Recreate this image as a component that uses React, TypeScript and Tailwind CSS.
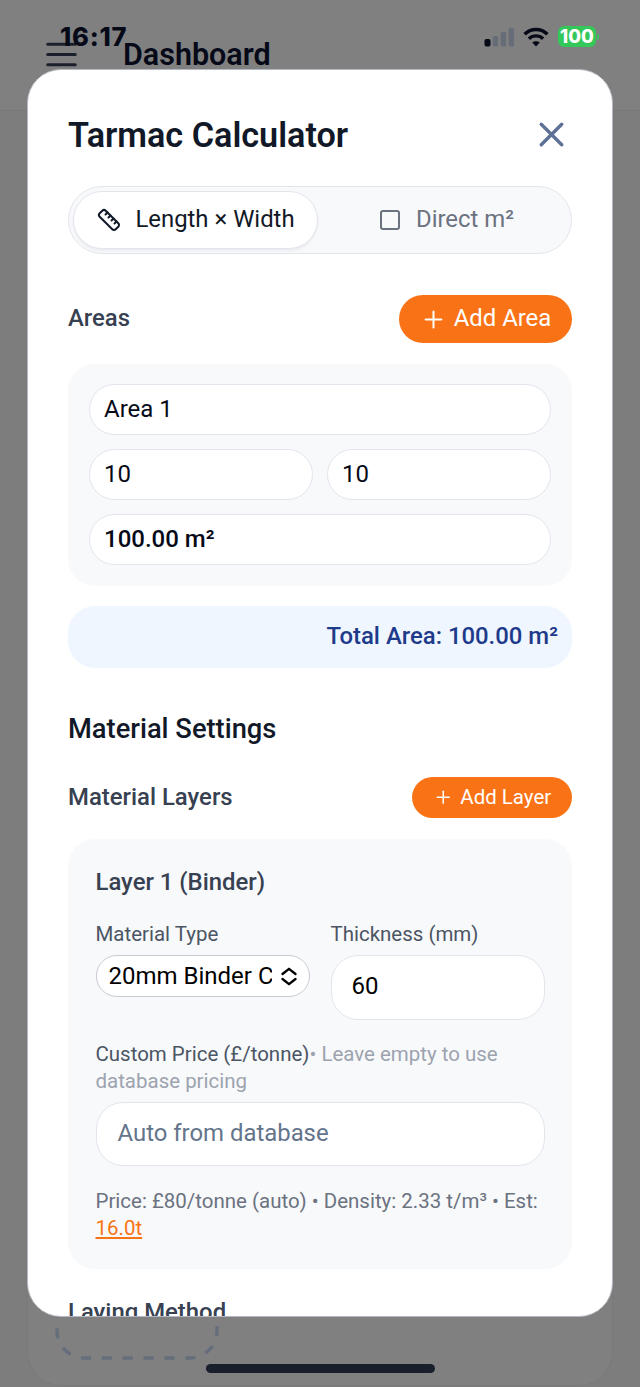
import React, { useState } from 'react';
import { Plus, Ruler, Square, X } from 'lucide-react';

// ─── Types ───────────────────────────────────────────────────────────────────

type Mode = 'dimensions' | 'direct';

// ─── Status bar ───────────────────────────────────────────────────────────────

function StatusBar() {
  return (
    <div className="absolute inset-x-0 top-0 z-20 flex h-[70px] items-start justify-between pl-[60px] pr-[41px] pt-[22px]">
      <span className="font-['Inter'] text-[25.5px] font-extrabold leading-[29px] tracking-[0.8px] text-[#060a18]">
        16:17
      </span>
      <div className="flex items-center pt-[4px]">
        <svg width="31" height="20" viewBox="0 0 31 20" aria-hidden="true">
          <rect x="0.5" y="12" width="6" height="7.5" rx="1.8" fill="#060a18" />
          <rect x="8.7" y="9" width="5.4" height="10.5" rx="1.6" fill="#666c78" />
          <rect x="16.7" y="5" width="5.4" height="14.5" rx="1.6" fill="#666c78" />
          <rect x="24.7" y="1" width="5.4" height="18.5" rx="1.6" fill="#666c78" />
        </svg>
        <svg className="ml-[8px]" width="26" height="20" viewBox="0 0 26 20" fill="none" aria-hidden="true">
          <path d="M1.6 7.2C8 0.9 18 0.9 24.4 7.2" stroke="#060a18" strokeWidth="3.5" />
          <path d="M5.9 11.8C9.9 8 16.1 8 20.1 11.8" stroke="#060a18" strokeWidth="3.3" />
          <path d="M13 19.4L9.2 15.6C11.3 13.7 14.7 13.7 16.8 15.6Z" fill="#060a18" />
        </svg>
        <div className="ml-[9px] flex h-[21px] w-[38px] items-center justify-center rounded-[6px] bg-[#34c759] font-['Inter'] text-[18.5px] font-extrabold leading-none text-white">
          100
        </div>
        <span className="ml-[1px] h-[6px] w-[2px] rounded-r-full bg-[#34c759]" />
      </div>
    </div>
  );
}

// ─── Page behind the dialog ───────────────────────────────────────────────────

function DashboardBackdrop() {
  return (
    <div className="flex h-full flex-col bg-[#7d7d7d]">
      <header className="flex h-[111px] shrink-0 items-start border-b border-[#777777] bg-[#808080] pl-[41px] pt-[34px]">
        <svg width="41" height="41" viewBox="0 0 24 24" fill="none" aria-hidden="true">
          <path d="M4 6h16M4 12h16M4 18h16" stroke="#1b202d" strokeWidth="1.9" strokeLinecap="round" />
        </svg>
        <h1 className="ml-[41px] text-[30.5px] font-semibold leading-[41px] text-[#060a18]">Dashboard</h1>
      </header>
      <main className="flex flex-1 flex-col px-[27px]">
        <div className="flex h-[1275px] flex-col justify-end rounded-[34px] border border-[#7a7a7a] bg-[#808080] px-[27px] pb-[25px]">
          <svg width="164" height="124" viewBox="0 0 164 124" fill="none" aria-hidden="true">
            <path
              d="M2 0V95A27 27 0 0 0 29 122H135A27 27 0 0 0 162 95V0"
              stroke="#666e7b"
              strokeWidth="3.4"
              strokeDasharray="10.2 10.7"
              strokeDashoffset="12.2"
            />
          </svg>
        </div>
      </main>
    </div>
  );
}

// ─── Form pieces ──────────────────────────────────────────────────────────────

function AreaField({ children, bold = false }: { children: React.ReactNode; bold?: boolean }) {
  return (
    <div
      className={`flex h-[51px] flex-1 items-center rounded-full border-[1.5px] border-[#e2e5ec] bg-white px-[14px] pb-[2px] text-[24px] leading-[34px] text-[#060a18] ${
        bold ? 'font-medium' : 'font-normal'
      }`}
    >
      {children}
    </div>
  );
}

function ModeToggle() {
  const [mode, setMode] = useState<Mode>('dimensions');
  const active = 'border-[1.5px] border-[#e2e5ec] bg-white text-[#111827] shadow-[0_2px_3px_rgba(15,23,42,0.06)]';
  const idle = 'text-[#6b7280]';

  return (
    <div className="mt-[28px] flex h-[68px] shrink-0 rounded-full border-[1.5px] border-[#e2e5ec] bg-[#f8f9fb] p-[4px]">
      <button
        type="button"
        onClick={() => setMode('dimensions')}
        className={`flex h-[58px] flex-1 items-center justify-center gap-[14px] rounded-full pl-px text-[23.9px] ${
          mode === 'dimensions' ? active : idle
        }`}
      >
        <Ruler className="h-[24px] w-[24px]" />
        <span>Length × Width</span>
      </button>
      <button
        type="button"
        onClick={() => setMode('direct')}
        className={`ml-[7px] flex h-[58px] flex-1 items-center justify-center gap-[14px] rounded-full text-[23.9px] ${
          mode === 'direct' ? active : idle
        }`}
      >
        <Square className="h-[24px] w-[24px]" />
        <span>Direct m²</span>
      </button>
    </div>
  );
}

function LayerCard() {
  return (
    <section className="mt-[21px] flex h-[430px] shrink-0 flex-col rounded-[27px] bg-[#f8f9fb] px-[27.5px] pt-[26px] text-[20.48px] leading-[27px] text-[#4b5563]">
      <h4 className="text-[23.9px] font-medium leading-[34px] text-[#374151]">Layer 1 (Binder)</h4>

      <div className="mt-[22px] flex gap-[21px]">
        <div className="w-[214px]">
          <div>Material Type</div>
          <div className="mt-[7px] flex h-[42px] items-center rounded-full border-[1.5px] border-[#c9cbd3] bg-white pl-[12px] text-[24px] text-black">
            <span className="w-[163px] overflow-hidden whitespace-nowrap leading-[34px]">
              20mm Binder C
            </span>
            <svg className="ml-[9px] shrink-0" width="16" height="19" viewBox="0 0 16 19" fill="none" aria-hidden="true">
              <path
                d="M1.5 7L8 1.8L14.5 7M1.5 12L8 17.2L14.5 12"
                stroke="black"
                strokeWidth="2.3"
                strokeLinecap="round"
                strokeLinejoin="round"
              />
            </svg>
          </div>
        </div>
        <div className="flex-1">
          <div>Thickness (mm)</div>
          <div className="mt-[7px] flex h-[65px] items-center rounded-[27px] border-[1.5px] border-[#e2e5ec] bg-white pb-[2px] pl-[20px] text-[24px] text-black">
            60
          </div>
        </div>
      </div>

      <div className="mt-[21px]">
        Custom Price (£/tonne)
        <span className="text-[#9ca3af]">• Leave empty to use database pricing</span>
      </div>
      <div className="mt-[7px] flex h-[64px] shrink-0 items-center rounded-[27px] border-[1.5px] border-[#e2e5ec] bg-white pb-[1px] pl-[21px] text-[23.9px] text-[#64748b]">
        Auto from database
      </div>

      <p className="mt-[22px] whitespace-nowrap text-[#6b7280]">
        Price: £80/tonne (auto) • Density: 2.33 t/m³ • Est:
        <br />
        <span className="text-[#f97316] underline">16.0t</span>
      </p>
    </section>
  );
}

// ─── TarmacCalculator ─────────────────────────────────────────────────────────

function TarmacCalculator() {
  return (
    <div
      role="dialog"
      aria-label="Tarmac Calculator"
      className="flex h-[1248px] w-[586px] flex-col overflow-hidden rounded-[34px] border border-[#b4b8c0] bg-white px-[40px] pt-[40px]"
    >
      <div className="flex h-[48px] shrink-0 items-center justify-between">
        <h2 className="mt-[3px] text-[34.2px] font-semibold text-[#111827]">Tarmac Calculator</h2>
        <button type="button" aria-label="Close">
          <X className="h-[41px] w-[41px] text-[#5f7096]" strokeWidth={2} />
        </button>
      </div>

      <ModeToggle />

      {/* Areas */}
      <div className="mt-[41px] flex h-[48px] shrink-0 items-center justify-between">
        <h3 className="text-[23.9px] font-medium text-[#374151]">Areas</h3>
        <button
          type="button"
          className="flex h-[48px] w-[173px] items-center justify-center gap-[7px] rounded-full bg-[#f97316] text-[23.9px] text-white"
        >
          <Plus className="h-[27px] w-[27px]" strokeWidth={1.8} />
          <span className="-mt-[1px]">Add Area</span>
        </button>
      </div>

      <section className="mt-[21px] flex h-[222px] shrink-0 flex-col gap-[14px] rounded-[27px] bg-[#f8f9fb] px-[21px] py-[20px]">
        <div className="flex">
          <AreaField>Area 1</AreaField>
        </div>
        <div className="flex gap-[14px]">
          <AreaField>10</AreaField>
          <AreaField>10</AreaField>
        </div>
        <div className="flex">
          <AreaField bold>100.00 m²</AreaField>
        </div>
      </section>

      <div className="mt-[20px] flex h-[62px] shrink-0 items-center justify-end rounded-[27px] bg-[#eff6ff] pb-[1px] pr-[14px] text-[23.9px] font-medium text-[#1e3a8a]">
        Total Area: 100.00 m²
      </div>

      {/* Material settings */}
      <h3 className="mt-[41px] text-[27.3px] font-medium leading-[41px] text-[#111827]">Material Settings</h3>

      <div className="mt-[27px] flex h-[41px] shrink-0 items-center justify-between">
        <h4 className="text-[23.9px] font-medium text-[#374151]">Material Layers</h4>
        <button
          type="button"
          className="flex h-[41px] w-[160px] items-center justify-center gap-[7px] rounded-full bg-[#f97316] text-[20.48px] text-white"
        >
          <Plus className="h-[20.5px] w-[20.5px]" strokeWidth={1.8} />
          Add Layer
        </button>
      </div>

      <LayerCard />

      <h4 className="mt-[26px] shrink-0 text-[23.9px] font-medium leading-[34px] text-[#374151]">Laying Method</h4>
    </div>
  );
}

export default function App() {
  return (
    <div className="relative h-[1387px] w-[640px] overflow-hidden font-['Roboto',sans-serif]">
      <DashboardBackdrop />
      <StatusBar />
      <div className="absolute inset-0 z-10 flex items-start justify-center pt-[69px]">
        <TarmacCalculator />
      </div>
      {/* Home indicator */}
      <div className="absolute bottom-[14px] left-[206px] z-20 h-[9px] w-[229px] rounded-full bg-[#1a1f2c]" />
    </div>
  );
}
